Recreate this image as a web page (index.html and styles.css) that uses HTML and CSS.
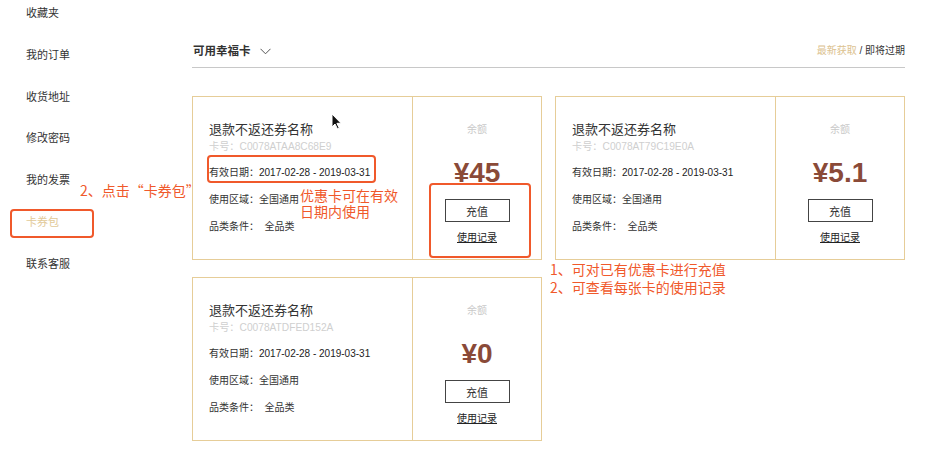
FILE: index.html
```html
<!DOCTYPE html>
<html lang="zh-CN">
<head>
<meta charset="utf-8">
<title>卡券包</title>
<link rel="stylesheet" href="styles.css">
</head>
<body>
<div class="page">
  <nav class="sidebar">
    <a class="nav-item">收藏夹</a>
    <a class="nav-item">我的订单</a>
    <a class="nav-item">收货地址</a>
    <a class="nav-item">修改密码</a>
    <a class="nav-item">我的发票</a>
    <a class="nav-item active">卡券包</a>
    <a class="nav-item">联系客服</a>
  </nav>
  <main class="main">
    <div class="toolbar">
      <div class="filter">可用幸福卡
        <svg class="chev" width="11" height="7" viewBox="0 0 11 7"><path d="M0.5 0.8 L5.5 5.8 L10.5 0.8" fill="none" stroke="#555" stroke-width="1"/></svg>
      </div>
      <div class="sort"><span class="sort-on">最新获取</span> / 即将过期</div>
    </div>
    <div class="cards">
      <div class="card">
        <div class="info">
          <div class="title">退款不返还券名称</div>
          <div class="cardno">卡号：C0078ATAA8C68E9</div>
          <div class="row">有效日期：<span class="date">2017-02-28 - 2019-03-31</span></div>
          <div class="row row2">使用区域：全国通用</div>
          <div class="row row2">品类条件：&nbsp;&nbsp;全品类</div>
        </div>
        <div class="balance">
          <div class="bal-label">余额</div>
          <div class="amount">¥45</div>
          <button class="btn">充值</button>
          <a class="record">使用记录</a>
        </div>
      </div>
      <div class="card">
        <div class="info">
          <div class="title">退款不返还券名称</div>
          <div class="cardno">卡号：C0078AT79C19E0A</div>
          <div class="row">有效日期：<span class="date">2017-02-28 - 2019-03-31</span></div>
          <div class="row row2">使用区域：全国通用</div>
          <div class="row row2">品类条件：&nbsp;&nbsp;全品类</div>
        </div>
        <div class="balance">
          <div class="bal-label">余额</div>
          <div class="amount">¥5.1</div>
          <button class="btn">充值</button>
          <a class="record">使用记录</a>
        </div>
      </div>
      <div class="card">
        <div class="info">
          <div class="title">退款不返还券名称</div>
          <div class="cardno">卡号：C0078ATDFED152A</div>
          <div class="row">有效日期：<span class="date">2017-02-28 - 2019-03-31</span></div>
          <div class="row row2">使用区域：全国通用</div>
          <div class="row row2">品类条件：&nbsp;&nbsp;全品类</div>
        </div>
        <div class="balance">
          <div class="bal-label">余额</div>
          <div class="amount">¥0</div>
          <button class="btn">充值</button>
          <a class="record">使用记录</a>
        </div>
      </div>
    </div>
  </main>
</div>

<div class="mark mark-nav"></div>
<div class="mark mark-date"></div>
<div class="mark mark-action"></div>
<div class="note note-nav">2、点击“卡券包”</div>
<div class="note note-date">优惠卡可在有效<br>日期内使用</div>
<div class="note note-action">1、可对已有优惠卡进行充值<br>2、可查看每张卡的使用记录</div>
<svg class="cursor" width="11" height="17" viewBox="0 0 11 17"><path d="M1 1 L1 14 L4 11 L6.5 16 L8.3 15.2 L5.9 10.3 L10 10.3 Z" fill="#111" stroke="#fff" stroke-width="1" stroke-linejoin="round"/></svg>
</body>
</html>
```

FILE: styles.css
```css
* { box-sizing: border-box; }
html, body { margin: 0; padding: 0; background: #fff; }
body {
  font-family: "Liberation Sans", "Noto Sans CJK SC", sans-serif;
  color: #333;
  width: 941px;
  height: 449px;
  overflow: hidden;
  position: relative;
}
.page { display: flex; }
.sidebar {
  width: 192px;
  flex: none;
  display: flex;
  flex-direction: column;
  padding: 3px 0 0 26px;
  gap: 21.8px;
}
.nav-item {
  font-size: 11px;
  line-height: 20px;
  color: #333;
  text-decoration: none;
}
.nav-item.active { color: #e2c997; }

.main { width: 713px; flex: none; }
.toolbar {
  display: flex;
  justify-content: space-between;
  align-items: center;
  padding: 42px 0 7px 1px;
  border-bottom: 1px solid #c8c8c8;
}
.filter {
  font-size: 11.5px;
  line-height: 18px;
  font-weight: 600;
  color: #333;
  display: flex;
  align-items: center;
}
.chev { margin-left: 9px; }
.sort { font-size: 10px; line-height: 18px; color: #333; }
.sort-on { color: #dcc28f; }

.cards {
  display: grid;
  grid-template-columns: 350px 350px;
  column-gap: 13px;
  row-gap: 17px;
  margin-top: 28px;
}
.card {
  height: 164px;
  border: 1px solid #e6cd98;
  display: flex;
}
.info {
  width: 220px;
  border-right: 1px solid #e6cd98;
  padding: 24px 0 0 16px;
}
.title { font-size: 13px; line-height: 18px; color: #333; }
.cardno { font-size: 10.2px; line-height: 16px; color: #cfcfcf; }
.row { font-size: 10px; line-height: 16px; color: #333; margin-top: 10px; }
.row2 { margin-top: 11px; }
.date { font-size: 10px; color: #222; }

.balance {
  flex: 1;
  display: flex;
  flex-direction: column;
  align-items: center;
  padding-top: 24px;
}
.bal-label { font-size: 10px; line-height: 18px; color: #c9c9c9; }
.amount {
  font-size: 28px;
  line-height: 34px;
  font-weight: bold;
  color: #8a4a38;
  margin-top: 17px;
}
.btn {
  margin-top: 9px;
  width: 65px;
  height: 23px;
  border: 1px solid #444;
  background: #fff;
  font-family: inherit;
  font-size: 11px;
  color: #333;
  padding: 0;
}
.record {
  margin-top: 9px;
  font-size: 10px;
  line-height: 14px;
  color: #222;
  text-decoration: underline;
}

.mark {
  position: absolute;
  border: 2px solid #f0592b;
  border-radius: 4px;
}
.mark-nav { left: 10px; top: 209px; width: 84px; height: 29px; }
.mark-date { left: 207px; top: 155px; width: 169px; height: 28px; }
.mark-action { left: 429px; top: 183px; width: 102px; height: 75px; }
.note {
  position: absolute;
  color: #f0592b;
  font-family: "Noto Sans CJK SC", "Liberation Sans", sans-serif;
  font-size: 14px;
}
.note-nav { left: 80px; top: 181px; line-height: 18px; }
.note-date { left: 300px; top: 187px; line-height: 16px; }
.note-action { left: 550px; top: 260px; line-height: 18px; }
.cursor { position: absolute; left: 331px; top: 113px; }
```
